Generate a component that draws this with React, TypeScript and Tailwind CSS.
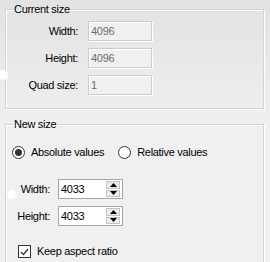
import React from "react";

function Spinner({ value }: { value: string }) {
  return (
    <div className="flex h-[20px] w-[65px] border border-[#a5a5a5] bg-white">
      <div className="flex flex-1 items-center pl-[2px] text-black">{value}</div>
      <div className="my-[1px] mr-[2px] flex w-[14px] flex-col gap-[1px]">
        <div className="flex flex-1 items-center justify-center border border-[#c4c4c4] bg-[#ececec]">
          <svg width="7" height="4" viewBox="0 0 7 4"><path d="M3.5 0L7 4H0Z" fill="#000" /></svg>
        </div>
        <div className="flex flex-1 items-center justify-center border border-[#c4c4c4] bg-[#ececec]">
          <svg width="7" height="4" viewBox="0 0 7 4"><path d="M0 0H7L3.5 4Z" fill="#000" /></svg>
        </div>
      </div>
    </div>
  );
}

function Disabled({ value }: { value: string }) {
  return (
    <div className="flex h-[20px] w-[64px] items-center border border-[#cccccc] bg-[#f0f0f0] pl-[2px] text-[#6d6d6d] shadow-[inset_1px_1px_0_#ffffff,1px_1px_0_#ffffff]">
      {value}
    </div>
  );
}

function Radio({ checked, label }: { checked?: boolean; label: string }) {
  return (
    <div className="flex items-center gap-[6px]">
      <div className="flex h-[13px] w-[13px] items-center justify-center rounded-full border border-[#333333] bg-white">
        {checked && <div className="h-[7px] w-[7px] rounded-full bg-[#333333]" />}
      </div>
      <span>{label}</span>
    </div>
  );
}

export default function App() {
  return (
    <div
      className="relative flex h-[262px] w-[270px] flex-col gap-[9px] overflow-hidden bg-gradient-to-b from-[#e2e2e2] via-[#f0f0f0] to-[#f0f0f0] pl-[5px] pr-[6px] pt-[3px] text-[11px] leading-[13px] tracking-[-0.3px] text-black"
      style={{ fontFamily: '"Liberation Sans", Arial, sans-serif' }}
    >
      <fieldset className="h-[106px] shrink-0 border border-[#d3d3d3] shadow-[inset_1px_1px_0_#ffffff,1px_1px_0_#ffffff] px-0">
        <legend className="ml-[7px] px-[1px]">Current size</legend>
        <div className="mt-[5px] grid grid-cols-[72px_64px] items-center gap-x-[10px] gap-y-[7px]">
          <span className="text-right">Width:</span>
          <Disabled value="4096" />
          <span className="text-right">Height:</span>
          <Disabled value="4096" />
          <span className="text-right">Quad size:</span>
          <Disabled value="1" />
        </div>
      </fieldset>
      <fieldset className="h-[160px] shrink-0 border border-[#d3d3d3] shadow-[inset_1px_1px_0_#ffffff,1px_1px_0_#ffffff] px-0">
        <legend className="ml-[7px] px-[1px]">New size</legend>
        <div className="ml-[6px] mt-[15px] flex gap-[14px]">
          <Radio checked label="Absolute values" />
          <Radio label="Relative values" />
        </div>
        <div className="ml-[8px] mt-[20px] grid grid-cols-[36px_65px] items-center gap-x-[8px] gap-y-[7px]">
          <span className="text-right">Width:</span>
          <Spinner value="4033" />
          <span className="text-right">Height:</span>
          <Spinner value="4033" />
        </div>
        <div className="ml-[12px] mt-[19px] flex items-center gap-[6px]">
          <div className="flex h-[13px] w-[13px] items-center justify-center border border-[#333333] bg-white">
            <svg width="9" height="8" viewBox="0 0 9 8"><path d="M1 4L3.5 6.5L8 1" stroke="#333" strokeWidth="1.3" fill="none" /></svg>
          </div>
          <span>Keep aspect ratio</span>
        </div>
      </fieldset>
      <div className="absolute left-[-2px] top-[70px] h-[10px] w-[10px] rounded-full bg-white blur-[0.5px]" />
      <div className="absolute left-[7px] top-[190px] h-[9px] w-[9px] rounded-full bg-white blur-[0.5px]" />
    </div>
  );
}
